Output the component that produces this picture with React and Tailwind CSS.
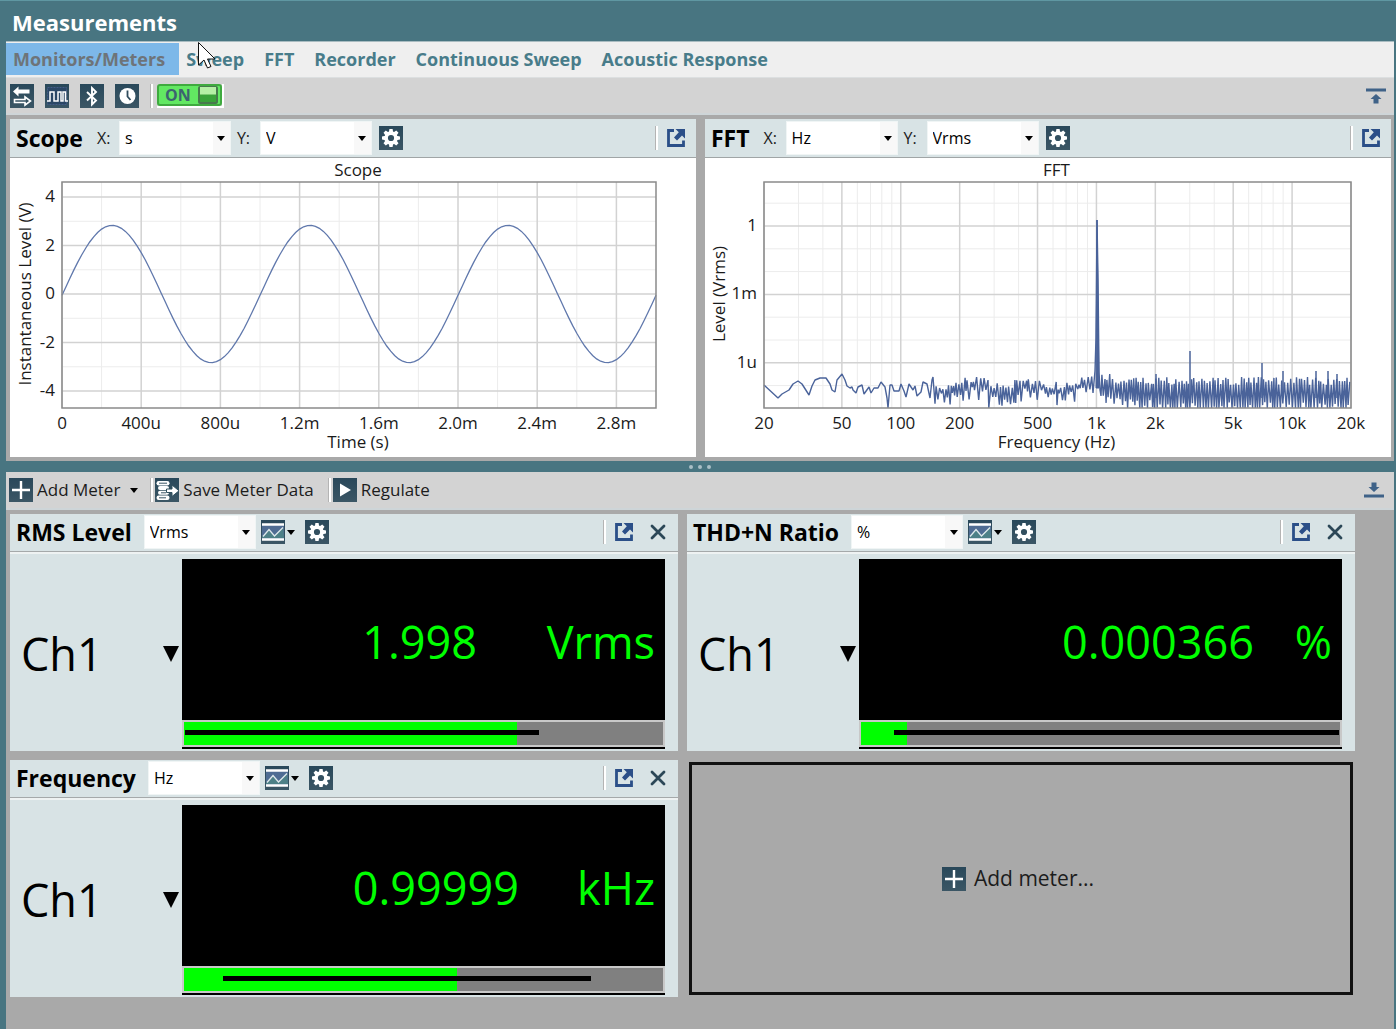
import React, { useState } from 'react';

const TABS = ['Monitors/Meters', 'Sweep', 'FFT', 'Recorder', 'Continuous Sweep', 'Acoustic Response'];

const METERS = [
  { id: 'rms', title: 'RMS Level', unit: 'Vrms', value: '1.998', reading: 'Vrms', unitWidth: 'w-[178px]', level: 69.5, range: [0.2, 74.2] },
  { id: 'thd', title: 'THD+N Ratio', unit: '%', value: '0.000366', reading: '%', unitWidth: 'w-[78px]', level: 9.6, range: [6.9, 99.7] },
  { id: 'freq', title: 'Frequency', unit: 'Hz', value: '0.99999', reading: 'kHz', unitWidth: 'w-[136px]', level: 57, range: [8.2, 85] },
];

/* ---------- icons ---------- */

function IconBox({ children }) {
  return (
    <span className="block size-6 bg-linear-to-b from-[#29485a] to-[#3b5665] text-white">
      <svg viewBox="0 0 24 24" className="size-6" aria-hidden="true">{children}</svg>
    </span>
  );
}

function GearIcon() {
  const teeth = [0, 45, 90, 135, 180, 225, 270, 315];
  return (
    <IconBox>
      {teeth.map((a) => (
        <path key={a} d="M9.8 6.5 10.4 3h3.2l.6 3.500z" fill="currentColor" transform={`rotate(${a} 12 12)`} />
      ))}
      <circle cx="12" cy="12" r="4.900" fill="none" stroke="currentColor" strokeWidth="3.600" />
    </IconBox>
  );
}

function SwapIcon() {
  return (
    <IconBox>
      <path d="M3 7.500 8.500 2.500V5.500H19.500V9.500H8.500V12.500z" fill="currentColor" />
      <path d="M4.500 15.500H15V12.800L20.500 17 15 21.200V18.500H4.500z" fill="none" stroke="currentColor" strokeWidth="1.600" />
    </IconBox>
  );
}

function WaveIcon() {
  return (
    <IconBox>
      <rect x="2.500" y="3.500" width="19" height="17" fill="#2b4766" stroke="#445c88" strokeDasharray="2 1" />
      <path d="M2 17H5V8H9V17H13V8H16V17H18V8H20.500V17H23" fill="none" stroke="currentColor" strokeWidth="1.500" />
    </IconBox>
  );
}

function BluetoothIcon() {
  return (
    <IconBox>
      <path d="M7 8 16 16.500 12 20.500V4L16 8 7 16.500" fill="none" stroke="currentColor" strokeWidth="1.900" />
    </IconBox>
  );
}

function ClockIcon() {
  return (
    <IconBox>
      <circle cx="12.500" cy="12" r="8" fill="currentColor" />
      <path d="M12.500 6.500V12.500L15.500 16" fill="none" stroke="#2f4c5d" strokeWidth="1.800" />
    </IconBox>
  );
}

function PlusIcon() {
  return (
    <IconBox>
      <path d="M12 3V21M3 12H21" stroke="currentColor" strokeWidth="2.400" />
    </IconBox>
  );
}

function PlayIcon() {
  return (
    <IconBox>
      <path d="M7 5.500 18 12 7 18.500z" fill="currentColor" />
    </IconBox>
  );
}

function SaveDataIcon() {
  return (
    <IconBox>
      <rect x="1.500" y="3" width="13" height="4.500" rx="2.200" fill="currentColor" />
      <rect x="3" y="8" width="11" height="4" rx="2" fill="currentColor" />
      <rect x="3" y="12.800" width="11" height="4" rx="2" fill="currentColor" />
      <rect x="1.500" y="17.500" width="13" height="4.500" rx="2.200" fill="currentColor" />
      <path d="M4 5.200H12M6 14.800H11M4 19.800H11" stroke="#3b5665" strokeWidth="1" />
      <path d="M11.500 11H17V7L24 12.800 17 18.500V14.500H11.500z" fill="currentColor" stroke="#30505f" strokeWidth="1" />
    </IconBox>
  );
}

function BarChartIcon() {
  return (
    <IconBox>
      <path d="M1 4H23V20H1z" fill="#4f6c93" />
      <path d="M1 16.500 8 9.500 13.500 16 22 7.500 23 18H1z" fill="#4d8087" />
      <path d="M1 4.500H23M1 19.500H23" stroke="currentColor" strokeWidth="2.400" />
      <path d="M2 16.500 8 9.500 13.500 16 22 7.500" fill="none" stroke="#dfe9ec" strokeWidth="1.300" />
    </IconBox>
  );
}

function PopOutIcon() {
  return (
    <svg viewBox="0 0 20 20" className="size-5" aria-hidden="true">
      <path d="M8 2.500H2.500V17.500H17.500V12.500" fill="none" stroke="#2b4f88" strokeWidth="2.800" />
      <path d="M9.500 1H19V10.500L16 7.500 11 12.500 8 9.500 12.800 4.300z" fill="#2b4f88" />
    </svg>
  );
}

function CloseIcon() {
  return (
    <svg viewBox="0 0 16 16" className="size-4" aria-hidden="true">
      <path d="M2 2 14 14M14 2 2 14" stroke="#2b4757" strokeWidth="2.800" strokeLinecap="round" />
    </svg>
  );
}

function Arrow() {
  return (
    <svg viewBox="0 0 8 5" className="h-[5px] w-2" aria-hidden="true">
      <path d="M0 0H8L4 5z" fill="#000" />
    </svg>
  );
}

function CollapseIcon({ down }) {
  return (
    <svg viewBox="0 0 20 16" className="h-4 w-5" aria-hidden="true">
      {down ? (
        <path d="M0 12.500H20V15.500H0zM10 10 4.500 5H7.500V0.500H12.500V5H15.500z" fill="#3f6288" />
      ) : (
        <path d="M0 0.500H20V3.500H0zM10 6 15.500 11H12.500V15.500H7.500V11H4.500z" fill="#3f6288" />
      )}
    </svg>
  );
}

/* ---------- small controls ---------- */

function Divider() {
  return <span className="h-6 w-[3px] border-l border-r border-l-[#b4b4b4] border-r-white bg-white" />;
}

function IconButton({ label, children }) {
  return (
    <button type="button" aria-label={label} className="flex shrink-0 items-center">
      {children}
    </button>
  );
}

function UnitSelect({ label, value, options }) {
  return (
    <span className="relative block h-[34px] w-28 bg-white">
      <select
        aria-label={label}
        defaultValue={value}
        className="h-full w-full appearance-none border border-[#f0f5f5] bg-transparent pl-[5px] text-base text-black"
      >
        {(options || [value]).map((o) => <option key={o}>{o}</option>)}
      </select>
      <span className="pointer-events-none absolute inset-y-px right-px flex w-[17px] items-center justify-center bg-[#f8f8f8]">
        <Arrow />
      </span>
    </span>
  );
}

function Toggle() {
  const [on, setOn] = useState(true);
  return (
    <button
      type="button"
      role="switch"
      aria-checked={on}
      onClick={() => setOn(!on)}
      className="flex h-6 w-[67px] items-center justify-between border-r-2 border-b-2 border-white"
    >
      <span className="flex h-[22px] w-full items-center justify-between rounded-[3px] border-2 border-[#3faa3f] bg-[#62e862] pr-0.5 pl-1.5">
        <span className="text-base leading-4 font-bold text-[#3c6470]">{on ? 'ON' : 'OFF'}</span>
        <span className="h-[18px] w-5 rounded-xs border-2 border-t border-[#477a4d] bg-linear-to-b from-[#b5f0a5] from-45% to-[#3aa33a] to-55%" />
      </span>
    </button>
  );
}

/* ---------- charts ---------- */

const SCOPE = { left: 52, right: 646, top: 24, bottom: 250, zero: 136, perVolt: 24.25, perMs: 198 };
const FFT = { left: 59, right: 646, top: 24, bottom: 250, unity: 68, perDecade: 22.8 };

function ChartFrame({ title, xTitle, yTitle, plot, yTitleX, yTitleY, children }) {
  const mid = (plot.left + plot.right) / 2;
  return (
    <svg viewBox="0 0 686 299" className="block w-full bg-white" role="img" aria-label={title}>
      <text x={mid - 1} y="18" textAnchor="middle" fontSize="17" fill="#1a1a1a">{title}</text>
      {children}
      <rect
        x={plot.left}
        y={plot.top}
        width={plot.right - plot.left}
        height={plot.bottom - plot.top}
        fill="none"
        stroke="#8a8a8a"
        strokeWidth="1.500"
      />
      <text x={mid - 1} y="290" textAnchor="middle" fontSize="17" fill="#1a1a1a">{xTitle}</text>
      <text
        textAnchor="middle"
        fontSize="17"
        fill="#1a1a1a"
        transform={`translate(${yTitleX} ${yTitleY}) rotate(-90)`}
      >
        {yTitle}
      </text>
    </svg>
  );
}

function ScopeChart() {
  const x = (ms) => SCOPE.left + ms * SCOPE.perMs;
  const y = (v) => SCOPE.zero - v * SCOPE.perVolt;
  const minorX = [0.2, 0.6, 1, 1.4, 1.8, 2.2, 2.6];
  const majorX = [[0, '0'], [0.4, '400u'], [0.8, '800u'], [1.2, '1.2m'], [1.6, '1.6m'], [2, '2.0m'], [2.4, '2.4m'], [2.8, '2.8m']];
  const wave = [];
  for (let t = 0; t <= 3.0001; t += 0.02) {
    wave.push(`${x(t).toFixed(1)},${y(2.83 * Math.sin(2 * Math.PI * (t - 0.003))).toFixed(1)}`);
  }

  return (
    <ChartFrame title="Scope" xTitle="Time (s)" yTitle="Instantaneous Level (V)" plot={SCOPE} yTitleX={21} yTitleY={136}>
      {minorX.map((t) => <path key={t} d={`M${x(t)} 24V250`} stroke="#ececec" />)}
      {[3, 1, -1, -3].map((v) => <path key={v} d={`M52 ${y(v)}H646`} stroke="#ececec" />)}
      {majorX.map(([t, label]) => (
        <g key={label}>
          <path d={`M${x(t)} 24V250`} stroke="#d2d2d2" strokeWidth="1.500" />
          <text x={x(t)} y="271" textAnchor="middle" fontSize="17" fill="#1a1a1a">{label}</text>
        </g>
      ))}
      {[4, 2, 0, -2, -4].map((v) => (
        <g key={v}>
          <path d={`M52 ${y(v)}H646`} stroke="#d2d2d2" strokeWidth="1.500" />
          <text x="45" y={y(v) + 5} textAnchor="end" fontSize="17" fill="#1a1a1a">{v}</text>
        </g>
      ))}
      <polyline points={wave.join(' ')} fill="none" stroke="#6078ac" strokeWidth="1.300" />
    </ChartFrame>
  );
}

// low end of the spectrum, where single bins are far apart
const LOW_BINS = '59,227 73,240 77,236 84,232 88,226 93,223 97,226 104,237 107,228 110,222 115,220 121,220 125,226 127,232 130,234 132,222 137,216 140,222 142,228 145,230 147,229 148,232 151,235 153,229 157,227 159,236 164,229 166,235 169,230 173,230 176,224 180,229 182,240 183,250 185,227 187,227 189,233 194,233 196,226 199,233 201,239 204,226 208,232 210,228 212,238 216,234 218,224 222,226';

// harmonics standing out of the noise: x, top
const PEAKS = [[451, 216], [485, 193], [557, 205], [578, 213], [611, 213], [623, 213], [632, 216]];

function buildSpectrum() {
  let seed = 7;
  const rnd = () => {
    seed = (seed * 16807) % 2147483647;
    return seed / 2147483647;
  };
  const pts = [LOW_BINS, '225,240 227,222 228,219'];
  let px = 230;
  let high = false;
  while (px < 646) {
    if (px > 388 && px < 395) {
      pts.push('388,235 390,213 391,180 392,62 393,120 394,214 395,232');
      px = 396;
    }
    const dense = px > 395;
    // noise drifts slowly up and down below 1 kHz
    const drift = dense ? 0 : 3 * Math.sin(px / 9) + 2;
    const top = 219 + rnd() * 8 + drift - (px > 380 && px < 408 ? 5 : 0);
    const depth = dense ? Math.min(1, 0.5 + (px - 395) / 150) : 0.9;
    let low = 230 + drift + rnd() * 15 * depth + (dense ? 14 * depth : 0);
    if (rnd() > 0.93) low = 250;
    pts.push(`${px.toFixed(1)},${Math.min(250, high ? top : low).toFixed(1)}`);
    high = !high;
    px += dense ? 0.8 + rnd() : 0.8 + rnd() * 1.4;
  }
  return pts.join(' ');
}

const SPECTRUM = buildSpectrum();

function FftChart() {
  const x = (hz) => FFT.left + (Math.log10(hz / 20) / 3) * (FFT.right - FFT.left);
  const y = (exp) => FFT.unity - exp * FFT.perDecade;
  const minorX = [30, 40, 60, 70, 80, 90, 300, 400, 600, 700, 800, 900, 3000, 4000, 6000, 7000, 8000, 9000];
  const majorX = [[20, '20'], [50, '50'], [100, '100'], [200, '200'], [500, '500'], [1000, '1k'], [2000, '2k'], [5000, '5k'], [10000, '10k'], [20000, '20k']];

  return (
    <ChartFrame title="FFT" xTitle="Frequency (Hz)" yTitle="Level (Vrms)" plot={FFT} yTitleX={20} yTitleY={136}>
      {minorX.map((hz) => <path key={hz} d={`M${x(hz)} 24V250`} stroke="#ececec" />)}
      {[1, -1, -2, -4, -5, -7].map((e) => <path key={e} d={`M59 ${y(e)}H646`} stroke="#ececec" />)}
      {majorX.map(([hz, label]) => (
        <g key={label}>
          <path d={`M${x(hz)} 24V250`} stroke="#d2d2d2" strokeWidth="1.500" />
          <text x={x(hz)} y="271" textAnchor="middle" fontSize="17" fill="#1a1a1a">{label}</text>
        </g>
      ))}
      {[[0, '1'], [-3, '1m'], [-6, '1u']].map(([e, label]) => (
        <g key={label}>
          <path d={`M59 ${y(e)}H646`} stroke="#d2d2d2" strokeWidth="1.500" />
          <text x="52" y={y(e) + 5} textAnchor="end" fontSize="17" fill="#1a1a1a">{label}</text>
        </g>
      ))}
      <polyline points={SPECTRUM} fill="none" stroke="#4a639a" strokeWidth="1.400" strokeLinejoin="bevel" />
      <path d="M391 230 392 62 394 230z" fill="#4a639a" stroke="#4a639a" />
      {PEAKS.map(([px, top]) => <path key={px} d={`M${px} ${top}V240`} stroke="#4a639a" strokeWidth="1.500" />)}
    </ChartFrame>
  );
}

/* ---------- panels ---------- */

function GraphPanel({ title, xUnit, yUnit, children }) {
  return (
    <section className="bg-white">
      <header className="flex h-[38px] items-center bg-[#d8e3e5] pr-2.5 pl-1.5">
        <h2 className="text-[23px] font-bold text-black">{title}</h2>
        <span className="ml-3.5 w-[22px] text-base">X:</span>
        <UnitSelect label={`${title} X unit`} value={xUnit} />
        <span className="ml-1.5 w-[23px] text-base">Y:</span>
        <UnitSelect label={`${title} Y unit`} value={yUnit} />
        <span className="ml-[7px]"><IconButton label={`${title} settings`}><GearIcon /></IconButton></span>
        <span className="ml-auto flex items-center gap-2">
          <Divider />
          <IconButton label={`Undock ${title}`}><PopOutIcon /></IconButton>
        </span>
      </header>
      <div className="border-t border-[#a0a5a6]">{children}</div>
    </section>
  );
}

function MeterPanel({ meter }) {
  const [from, to] = meter.range;
  return (
    <section className="bg-[#d8e3e5]">
      <header className="flex h-[38px] items-center border-b border-[#a5a9aa] pr-3 pb-px pl-1.5">
        <h2 className="text-[23px] font-bold text-black">{meter.title}</h2>
        <span className="ml-3"><UnitSelect label={`${meter.title} unit`} value={meter.unit} /></span>
        <button type="button" aria-label="Meter bar options" className="ml-[5px] flex items-center gap-0.5">
          <BarChartIcon />
          <Arrow />
        </button>
        <span className="ml-2.5"><IconButton label={`${meter.title} settings`}><GearIcon /></IconButton></span>
        <span className="ml-auto flex items-center gap-2">
          <Divider />
          <IconButton label={`Undock ${meter.title}`}><PopOutIcon /></IconButton>
          <span className="ml-2 flex"><IconButton label={`Close ${meter.title}`}><CloseIcon /></IconButton></span>
        </span>
      </header>
      <div className="flex border-t-2 border-[#eef2f2] pt-[5px] pr-[13px] pb-0.5">
        <button type="button" className="flex w-[172px] shrink-0 items-center justify-between pr-[3px] pl-[11px] text-[45px] text-black">
          Ch1
          <svg viewBox="0 0 16 16" className="size-4" aria-hidden="true"><path d="M0 0H16L8 16z" /></svg>
        </button>
        <div className="min-w-0 flex-1 bg-black pb-0.5">
          <div className="flex h-[161px] items-center justify-end pt-1 pr-2.5 text-[45px] text-[#00ff00]">
            <span>{meter.value}</span>
            <span className={`${meter.unitWidth} text-right`}>{meter.reading}</span>
          </div>
          <div
            role="meter"
            aria-label={`${meter.title} level`}
            aria-valuenow={meter.level}
            className="relative h-[27px] border-2 border-[#c8c8c8] bg-[#808080]"
          >
            <div className="h-full bg-[#00ff00]" style={{ width: `${meter.level}%` }} />
            <div
              className="absolute top-2 h-[5px] bg-black"
              style={{ left: `${from}%`, width: `${to - from}%` }}
            />
          </div>
        </div>
      </div>
    </section>
  );
}

export default function App() {
  const [tab, setTab] = useState(TABS[0]);

  return (
    <div className="relative flex min-h-screen flex-col border-t border-[#5f97a2] bg-[#487581] pr-0.5 pl-1.5 font-['Open_Sans','Noto_Sans',sans-serif] text-[#1c1c1c]">
      <h1 className="flex h-10 items-center pt-0.5 pl-1.5 text-[22px] font-bold text-white">Measurements</h1>

      <nav className="flex h-[37px] items-center border-t border-b border-t-[#a9bcc1] border-b-[#dcdfe0] bg-[#efefef] pb-0.5">
        {TABS.map((name) => (
          <button
            key={name}
            type="button"
            onClick={() => setTab(name)}
            className={
              tab === name
                ? 'h-8 bg-[#7db8e9] pr-3.5 pl-[7px] text-lg font-bold text-[#6e7479]'
                : 'h-8 pr-[13px] pl-[7px] text-lg font-bold text-[#487c8a]'
            }
          >
            {name}
          </button>
        ))}
      </nav>

      <div className="flex h-[37px] items-center gap-[11px] border-b-2 border-[#ced5d8] bg-[#d3d3d3] pr-2 pl-1">
        <IconButton label="Loopback"><SwapIcon /></IconButton>
        <IconButton label="Generator"><WaveIcon /></IconButton>
        <IconButton label="Bluetooth"><BluetoothIcon /></IconButton>
        <IconButton label="Clock"><ClockIcon /></IconButton>
        <span className="flex items-center gap-1">
          <Divider />
          <Toggle />
        </span>
        <span className="ml-auto flex"><IconButton label="Collapse graphs"><CollapseIcon /></IconButton></span>
      </div>

      <div className="grid grid-cols-2 gap-[9px] bg-[#a9a9a9] pt-1 pr-[3px] pb-1 pl-1">
        <GraphPanel title="Scope" xUnit="s" yUnit="V"><ScopeChart /></GraphPanel>
        <GraphPanel title="FFT" xUnit="Hz" yUnit="Vrms"><FftChart /></GraphPanel>
      </div>

      <div className="flex h-[11px] items-center justify-center gap-[5px]">
        <span className="size-1 rounded-full bg-[#a9bfc6]" />
        <span className="size-1 rounded-full bg-[#a9bfc6]" />
        <span className="size-1 rounded-full bg-[#a9bfc6]" />
      </div>

      <div className="flex h-[38px] items-center border-b-2 border-[#ced5d8] bg-[#d3d3d3] pr-2.5 pl-[3px] text-[17px]">
        <button type="button" className="flex items-center gap-1">
          <PlusIcon />
          Add Meter
          <span className="pl-1.5"><Arrow /></span>
        </button>
        <span className="mr-0.5 ml-3 flex"><Divider /></span>
        <button type="button" className="flex items-center gap-1">
          <SaveDataIcon />
          Save Meter Data
        </button>
        <span className="mr-0.5 ml-3.5 flex"><Divider /></span>
        <button type="button" className="flex items-center gap-1">
          <PlayIcon />
          Regulate
        </button>
        <span className="ml-auto flex"><IconButton label="Collapse meters"><CollapseIcon down /></IconButton></span>
      </div>

      <main className="grow bg-[#a9a9a9] pt-1 pr-[39px] pb-8 pl-1">
        <div className="grid grid-cols-2 gap-[9px]">
          {METERS.map((m) => <MeterPanel key={m.id} meter={m} />)}
          <button
            type="button"
            className="m-0.5 flex items-center justify-center gap-2 border-[3px] border-[#111] pr-1.5 text-[21px] text-[#1c1c1c]"
          >
            <PlusIcon />
            Add meter...
          </button>
        </div>
      </main>

      {/* mouse pointer */}
      <svg viewBox="0 0 20 28" className="pointer-events-none absolute top-10 left-[197px] h-7 w-5" aria-hidden="true">
        <path d="M1.500 1.500V24L7 19 10.500 27 14 25.500 10.500 18H18z" fill="#fff" stroke="#111" strokeWidth="1" />
      </svg>
    </div>
  );
}
